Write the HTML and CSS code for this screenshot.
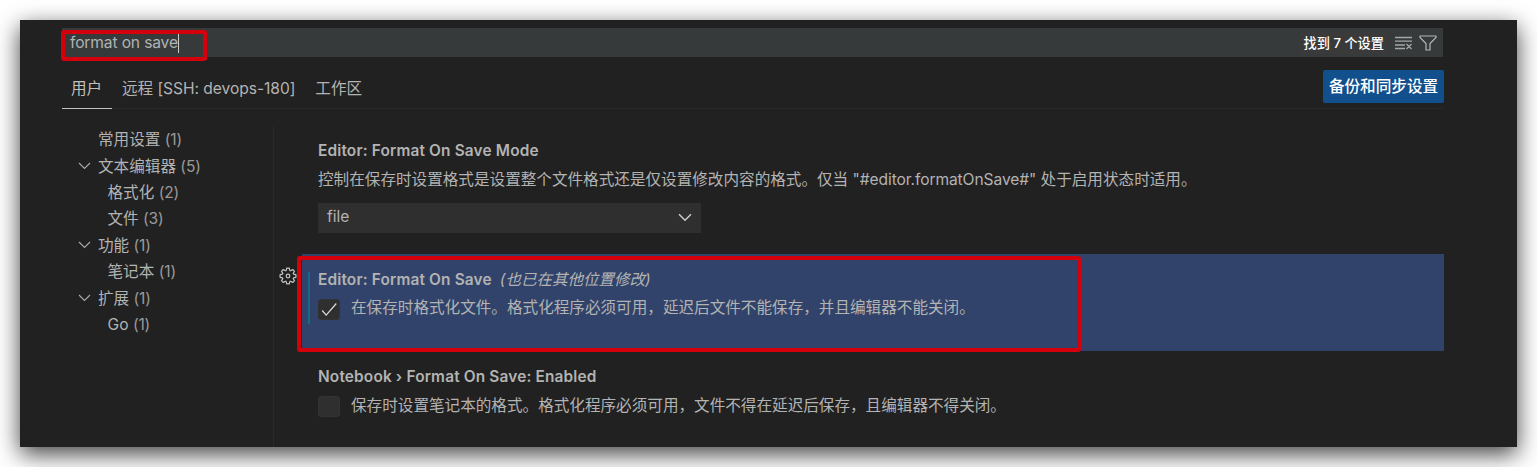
FILE: index.html
```html
<!DOCTYPE html>
<html lang="zh-CN">
<head>
<meta charset="utf-8">
<title>设置</title>
<link rel="stylesheet" href="styles.css">
</head>
<body>
<div class="window">
  <header class="search">
    <span class="query">format on save</span><span class="caret"></span>
    <span class="count">找到 7 个设置</span>
    <svg class="clear" width="18" height="14" viewBox="0 0 18 14" fill="none" stroke="#a6a8a8" stroke-width="1.3"><path d="M0 1.500h17M0 5.200h17M0 9h10M0 12.500h10M11.500 8l5 5M16.500 8l-5 5"/></svg>
    <svg class="filter" width="18" height="16" viewBox="0 0 18 16" fill="none" stroke="#b4b6b6" stroke-width="1.2"><path d="M1 1h16v1.500l-6 6V15H7V8.500l-6-6z"/></svg>
    <span class="mark mark-search"></span>
  </header>
  <nav class="tabs">
    <span class="tab active">用户</span>
    <span class="tab remote">远程 [SSH: devops-180]</span>
    <span class="tab">工作区</span>
    <button class="sync">备份和同步设置</button>
  </nav>
  <div class="body">
    <aside class="toc">
      <div class="row"><span class="arrow"></span>常用设置 <i>(1)</i></div>
      <div class="row"><svg class="arrow" viewBox="0 0 13 8"><path d="M1 1l5.500 5.500L12 1"/></svg>文本编辑器 <i>(5)</i></div>
      <div class="row child">格式化 <i>(2)</i></div>
      <div class="row child">文件 <i>(3)</i></div>
      <div class="row"><svg class="arrow" viewBox="0 0 13 8"><path d="M1 1l5.500 5.500L12 1"/></svg>功能 <i>(1)</i></div>
      <div class="row child">笔记本 <i>(1)</i></div>
      <div class="row"><svg class="arrow" viewBox="0 0 13 8"><path d="M1 1l5.500 5.500L12 1"/></svg>扩展 <i>(1)</i></div>
      <div class="row child">Go <i>(1)</i></div>
    </aside>
    <main class="list">
      <section class="item first">
        <h2>Editor: Format On Save Mode</h2>
        <p class="desc">控制在保存时设置格式是设置整个文件格式还是仅设置修改内容的格式。仅当 <span class="key">"#editor.formatOnSave#"</span> 处于启用状态时适用。</p>
        <div class="select">file<svg width="14" height="9" viewBox="0 0 14 9" fill="none" stroke="#ccc" stroke-width="1.500"><path d="M1 1.200l6 6 6-6"/></svg></div>
      </section>
      <section class="item selected">
        <svg class="gear" width="18" height="18" viewBox="-9 -9 18 18" fill="none" stroke="#c4c4c4" stroke-width="1.200" stroke-linejoin="round"><path d="M-1.300-7.900H1.300L1.800-5.500 2.600-5.200 4.700-6.500 6.500-4.700 5.200-2.600 5.500-1.800 7.900-1.300V1.300L5.500 1.800 5.200 2.600 6.500 4.700 4.700 6.500 2.600 5.200 1.800 5.500 1.300 7.900H-1.300L-1.800 5.500-2.600 5.200-4.700 6.500-6.500 4.700-5.200 2.600-5.500 1.800-7.900 1.300V-1.300L-5.500-1.800-5.200-2.600-6.500-4.700-4.700-6.500-2.600-5.200-1.800-5.500z"/><circle r="1.800"/></svg>
        <span class="modified"></span>
        <h2>Editor: Format On Save <em>(也已在其他位置修改)</em></h2>
        <div class="option"><span class="check"><svg width="20" height="19" viewBox="0 0 20 19" fill="none" stroke="#ddd" stroke-width="1.200"><path d="M3.200 10.500l4 4.700L17.300 3.500"/></svg></span><p class="desc">在保存时格式化文件。格式化程序必须可用，延迟后文件不能保存，并且编辑器不能关闭。</p></div>
        <span class="mark mark-item"></span>
      </section>
      <section class="item">
        <h2>Notebook › Format On Save: Enabled</h2>
        <div class="option"><span class="check"></span><p class="desc last">保存时设置笔记本的格式。格式化程序必须可用，文件不得在延迟后保存，且编辑器不得关闭。</p></div>
      </section>
    </main>
  </div>
</div>
</body>
</html>
```
FILE: styles.css
```css
* { box-sizing: border-box; }
body {
  margin: 0;
  padding: 20px;
  height: 467px;
  overflow: hidden;
  background: #fff;
  color: #b3b3b3;
  font: 15.6px/20px Inter, "Noto Sans CJK SC", sans-serif;
}
.window {
  height: 427px;
  padding: 8px 73px 0 42px;
  background: #212121;
  box-shadow: 0 7px 22px rgba(0, 0, 0, .75);
}
.search {
  position: relative;
  display: flex;
  align-items: center;
  width: 1381px;
  height: 29px;
  padding: 0 6px 0 8px;
  background: #363a3b;
}
.query { color: #b0b3b3; margin-top: 1px; letter-spacing: -.15px; }
.caret { width: 1px; height: 20px; background: #ccc; margin-top: 1px; }
.count {
  margin-left: auto;
  padding: 0 4px;
  height: 22px;
  line-height: 22px;
  font-size: 13.2px;
  font-weight: 500;
  color: #fff;
  background: #3a3a3a;
  border-radius: 2px;
}
.clear { margin: 0 6px 0 7px; }
.mark {
  position: absolute;
  border: 4px solid #d4000b;
  border-radius: 3px;
}
.mark-search { left: -1px; top: 2px; width: 146px; height: 31px; }
.tabs {
  display: flex;
  height: 52px;
  padding-top: 13px;
  border-bottom: 1px solid #282828;
}
.tab { height: 39px; padding: 0 10px; line-height: 38px; white-space: nowrap; }
.tab.active { width: 50px; padding: 0 0 0 9px; border-bottom: 1px solid #c0c0c0; color: #c0c0c0; }
.remote { letter-spacing: -.05px; }
.sync {
  width: 121px;
  height: 33px;
  margin-left: auto;
  padding: 0;
  border: 0;
  border-radius: 2px;
  background: #11508c;
  color: #fff;
  font: 500 15.6px/31px Inter, "Noto Sans CJK SC", sans-serif;
}
.body { display: flex; height: 338px; padding-top: 17px; }
.toc { width: 212px; border-right: 1px solid #292929; }
.row {
  display: flex;
  align-items: center;
  height: 26.4px;
  padding: 2px 0 0 16px;
  white-space: pre;
}
.child { padding-left: 45.5px; }
.row i { font-style: normal; letter-spacing: -.15px; color: #999; }
.arrow {
  width: 13px;
  height: 8px;
  margin: -2px 7px 0 0;
  fill: none;
  stroke: #aaa;
  stroke-width: 1.1;
}
.list { flex: 1; padding-left: 28px; }
.item { position: relative; height: 97px; padding: 16px 0 0 16px; }
.first { height: 128px; padding-top: 15px; }
.selected { background: #31436a; }
h2 { margin: 0; font-size: 15.4px; line-height: 20px; font-weight: 600; letter-spacing: .16px; white-space: nowrap; }
h2 em { margin-left: 4px; font-size: 15.5px; font-weight: 400; letter-spacing: 0; }
.desc { margin: 0; line-height: 20px; white-space: nowrap; }
.key { letter-spacing: -.1px; }
.last { margin-top: 1px; }
.first .desc { margin-top: 9px; }
.select {
  display: flex;
  align-items: center;
  justify-content: space-between;
  width: 383px;
  height: 30px;
  margin-top: 13px;
  padding: 0 9px 2px 9px;
  background: #2f2f2f;
}
.option { display: flex; align-items: flex-start; gap: 11px; margin-top: 8px; }
.check {
  width: 22px;
  height: 21px;
  margin-top: 1px;
  border: 1px solid #333;
  border-radius: 3px;
  background: #2f2f2f;
}
.check svg { display: block; }
.gear { position: absolute; left: -23px; top: 13px; }
.modified { position: absolute; left: 6px; top: 18px; width: 2px; height: 52px; background: #166a88; }
.mark-item { left: -5px; top: 2px; width: 784px; height: 96px; }
```
